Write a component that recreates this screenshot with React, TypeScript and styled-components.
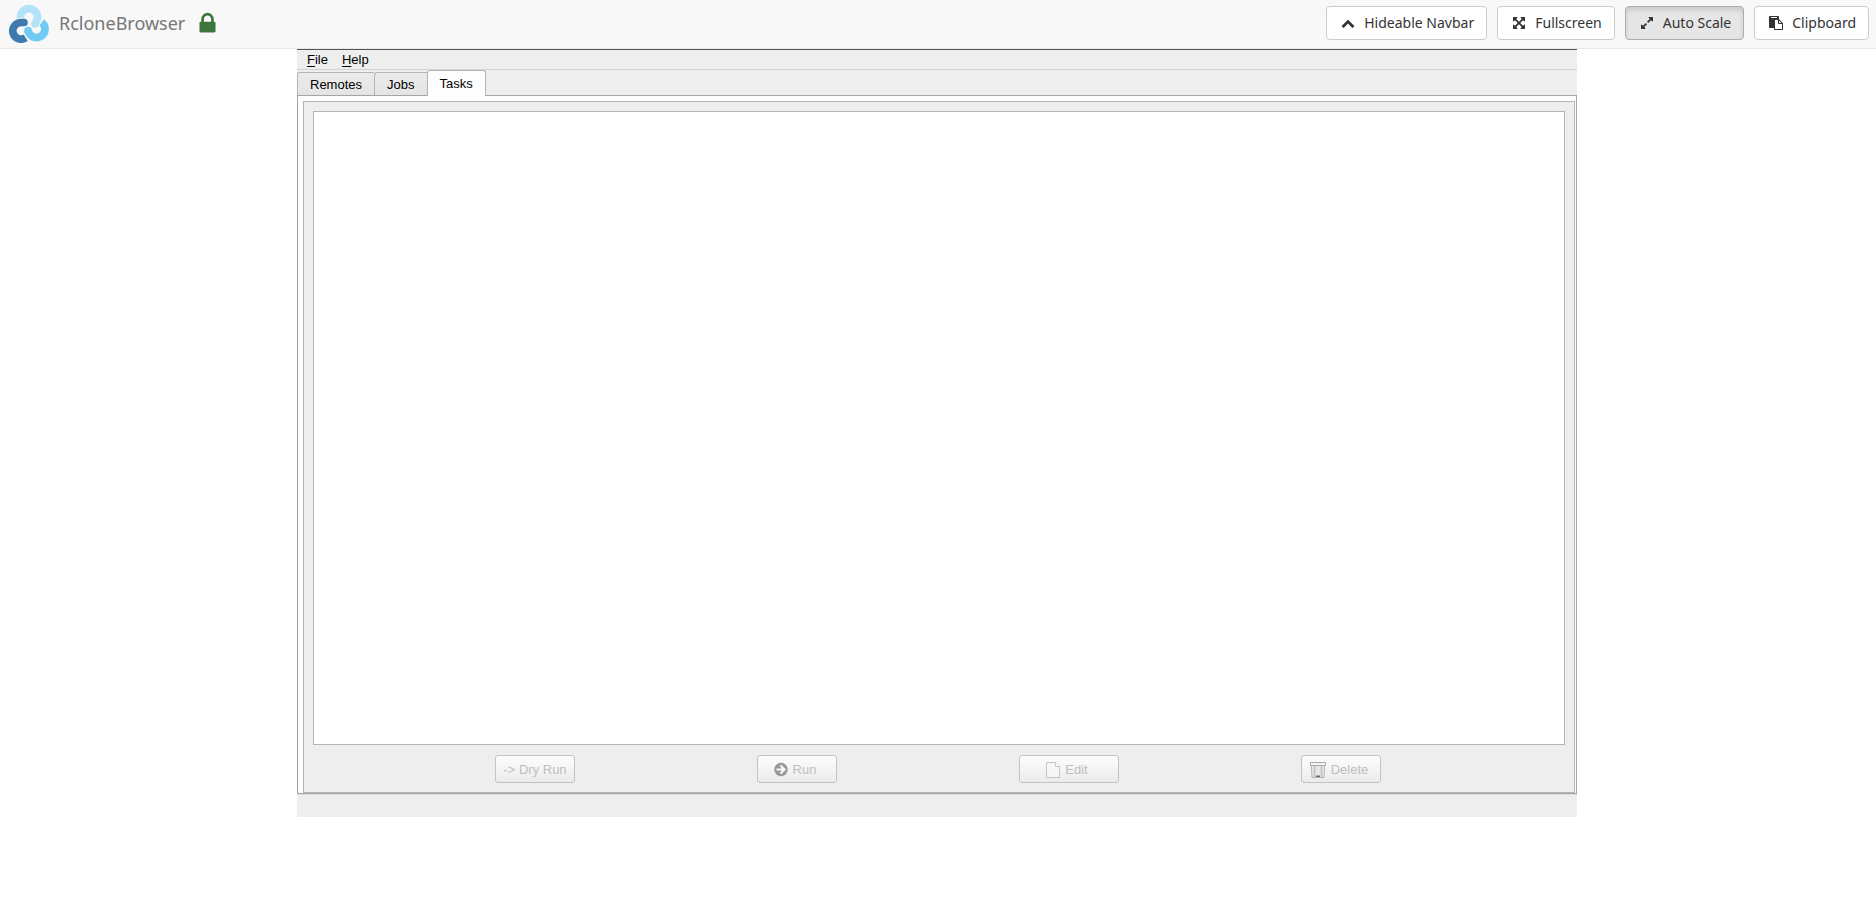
import React, { useState } from "react";
import styled, { createGlobalStyle, css } from "styled-components";

const GlobalStyle = createGlobalStyle`
  *, *::before, *::after { box-sizing: border-box; }
  body { margin: 0; background: #fff; }
`;

/* ---------- top navigation bar ---------- */

const Navbar = styled.nav`
  display: flex;
  align-items: center;
  justify-content: space-between;
  height: 49px;
  padding: 0 7px 2px 9px;
  background: #f8f8f8;
  border-bottom: 1px solid #e7e7e7;
  font: 14px/20px "Noto Sans", "Open Sans", sans-serif;
`;

const Brand = styled.div`
  display: flex;
  align-items: center;
`;

const BrandName = styled.a`
  margin: 0 10px;
  color: #777;
  font-size: 18px;
  line-height: 20px;
  text-decoration: none;
`;

const NavActions = styled.div`
  display: flex;
  gap: 10px;
`;

const NavButton = styled.button<{ $active?: boolean }>`
  display: flex;
  align-items: center;
  height: 34px;
  padding: 0 12px;
  gap: 7px;
  border: 1px solid #ccc;
  border-radius: 4px;
  background: #fff;
  color: #333;
  font: inherit;
  cursor: pointer;
  ${(p) =>
    p.$active &&
    css`
      background: #e6e6e6;
      border-color: #adadad;
      box-shadow: inset 0 3px 5px rgba(0, 0, 0, 0.125);
    `}
`;

const IconSlot = styled.span`
  display: flex;
  justify-content: center;
  width: 18px;
`;

/* ---------- application window ---------- */

const Stage = styled.main`
  display: flex;
  justify-content: center;
  padding-right: 2px;
  font: 13px/16px "Liberation Sans", Arial, sans-serif;
  color: #000;
`;

const AppWindow = styled.section`
  display: flex;
  flex-direction: column;
  width: 100%;
  max-width: 1280px;
  aspect-ratio: 5 / 3;
  background: #eee;
  border-top: 1px solid #555;
`;

const MenuBar = styled.div`
  display: flex;
  gap: 14px;
  padding: 2px 10px 1px;
  border-bottom: 1px solid #d3d3d3;
`;

const MenuButton = styled.button`
  padding: 0;
  border: 0;
  background: none;
  color: inherit;
  font: inherit;
  u { text-underline-offset: 2px; }
`;

const TabRow = styled.div`
  display: flex;
  align-items: flex-end;
  height: 25px;
`;

const Tab = styled.button<{ $active: boolean }>`
  height: 23px;
  padding: 2px 12px 0;
  border: 1px solid #b4b4b4;
  border-right-width: 0;
  border-bottom: 0;
  border-radius: 3px 0 0 0;
  background: linear-gradient(#ebebeb, #e4e4e4);
  color: inherit;
  font: inherit;
  ${(p) =>
    p.$active &&
    css`
      position: relative;
      height: 26px;
      margin-bottom: -1px;
      padding: 0 12px;
      border-right-width: 1px;
      border-radius: 3px 3px 0 0;
      background: #fdfdfd;
    `}
`;

const Pane = styled.div`
  display: flex;
  flex: 1;
  padding: 5px 1px 0 5px;
  border: 1px solid #a5a5a5;
  background: #fdfdfd;
`;

const Frame = styled.div`
  display: flex;
  flex: 1;
  flex-direction: column;
  padding: 9px;
  border: 1px solid #b4b4b4;
  background: #eee;
`;

const TaskList = styled.div`
  flex: 1;
  border: 1px solid #b4b4b4;
  background: #fff;
`;

const ActionRow = styled.div`
  display: flex;
  justify-content: space-evenly;
  padding: 10px 2px 0 0;
`;

const ActionButton = styled.button<{ $wide?: boolean }>`
  display: flex;
  align-items: center;
  justify-content: center;
  gap: 5px;
  width: ${(p) => (p.$wide ? 100 : 80)}px;
  height: 28px;
  padding: 1px 0 0;
  border: 1px solid #c3c3c3;
  border-radius: 3px;
  background: linear-gradient(#fdfdfd, #ebebeb);
  color: #bebebe;
  font: inherit;
  white-space: nowrap;
  &:has(svg) { padding-right: 4px; }
`;

const StatusBar = styled.footer`
  height: 23px;
  border-top: 1px solid #dcdcdc;
`;

/* ---------- drawings ---------- */

const GlyphSvg = styled.svg`
  display: block;
  fill: currentColor;
`;

const Glyph = ({ d, size = 14 }: { d: string; size?: number }) => (
  <GlyphSvg width={size} height={size} viewBox="0 0 1792 1792" aria-hidden>
    <path d={d} />
  </GlyphSvg>
);

const LockMark = styled.span`
  color: #3c763d;
`;

const glyphs = {
  chevron:
    "M1683 1331l-166 165q-19 19-45 19t-45-19l-531-531-531 531q-19 19-45 19t-45-19l-166-165q-19-19-19-45.5t19-45.5l742-741q19-19 45-19t45 19l742 741q19 19 19 45.5t-19 45.5z",
  arrows:
    "M1411 541l-355 355 355 355 144-144q29-31 70-14 39 17 39 59v448q0 26-19 45t-45 19h-448q-42 0-59-40-17-39 14-69l144-144-355-355-355 355 144 144q31 30 14 69-17 40-59 40h-448q-26 0-45-19t-19-45v-448q0-42 40-59 39-17 69 14l144 144 355-355-355-355-144 144q-19 19-45 19-12 0-24-5-40-17-40-59v-448q0-26 19-45t45-19h448q42 0 59 40 17 39-14 69l-144 144 355 355 355-355-144-144q-31-30-14-69 17-40 59-40h448q26 0 45 19t19 45v448q0 42-39 59-13 5-25 5-26 0-45-19z",
  expand:
    "M883 1056q0 13-10 23l-332 332 144 144q19 19 19 45t-19 45-45 19h-448q-26 0-45-19t-19-45v-448q0-26 19-45t45-19 45 19l144 144 332-332q10-10 23-10t23 10l114 114q10 10 10 23zm781-864v448q0 26-19 45t-45 19-45-19l-144-144-332 332q-10 10-23 10t-23-10l-114-114q-10-10-10-23t10-23l332-332-144-144q-19-19-19-45t19-45 45-19h448q26 0 45 19t19 45z",
  clipboard:
    "M768 1664h896v-640h-416q-40 0-68-28t-28-68v-416h-384v1152zm256-1440v-64q0-13-9.5-22.5t-22.5-9.5h-704q-13 0-22.5 9.5t-9.5 22.5v64q0 13 9.5 22.5t22.5 9.5h704q13 0 22.5-9.5t9.5-22.5zm256 672h299l-299-299v299zm512 128v672q0 40-28 68t-68 28h-960q-40 0-68-28t-28-68v-160h-544q-40 0-68-28t-28-68v-1344q0-40 28-68t68-28h1088q40 0 68 28t28 68v328q21 13 36 28l408 408q28 28 48 76t20 88z",
  lock: "M640 768h512v-192q0-106-75-181t-181-75-181 75-75 181v192zm832 96v576q0 40-28 68t-68 28h-960q-40 0-68-28t-28-68v-576q0-40 28-68t68-28h32v-192q0-184 132-316t316-132 316 132 132 316v192h32q40 0 68 28t28 68z",
};

const Logo = () => (
  <svg width="40" height="40" viewBox="27 9 120 120" fill="none" strokeWidth="23" aria-hidden>
    <path stroke="#b4e3f9" d="M61.5 54 A25.5 25.5 0 1 1 109 64 L105 71" />
    <circle cx="105" cy="72" r="11.5" fill="#b4e3f9" />
    <path stroke="#70caf2" d="M125 67 A25.5 25.5 0 1 1 84.500 92" />
    <circle cx="84" cy="92" r="11.5" fill="#70caf2" />
    <path stroke="#3f79ad" d="M72 67.500 H64 A25 25 0 1 0 77 113.500" />
    <circle cx="72" cy="67.500" r="11.5" fill="#3f79ad" />
  </svg>
);

const RunIcon = () => (
  <svg width="14" height="15" viewBox="0 0 14 15" aria-hidden>
    <circle cx="7" cy="7.500" r="6.800" fill="#999" />
    <path d="M2.500 7.500h7M6.500 3.500l4 4-4 4" fill="none" stroke="#fafafa" strokeWidth="2" />
  </svg>
);

const PageIcon = () => (
  <svg width="14" height="16" viewBox="0 0 14 16" fill="#f7f7f7" stroke="#c4c4c4" aria-hidden>
    <path d="M.5.5h9l4 4v11H.5z" />
    <path d="M9.500.5v4h4" fill="#fff" />
  </svg>
);

const TrashIcon = () => (
  <svg width="16" height="16" viewBox="0 0 16 16" aria-hidden>
    <path d="M1.500 3.500h13l-.5 12H2z" fill="#f0f0f0" stroke="#b0b0b0" />
    <path d="M4.500 4v11M11.500 4v11" stroke="#c4c4c4" strokeWidth="2" />
    <path d="M7 4v9M9 4v9" stroke="#ddd" />
    <path d="M.5.5h15v3H.5z" fill="#f5f5f5" stroke="#a8a8a8" />
    <path d="M6 13.500h4v1.500H6z" fill="#666" />
  </svg>
);

const tabs = ["Remotes", "Jobs", "Tasks"];

export default function App() {
  const [tab, setTab] = useState("Tasks");
  const [autoScale, setAutoScale] = useState(true);

  return (
    <>
      <GlobalStyle />
      <Navbar>
        <Brand>
          <Logo />
          <BrandName href="#">RcloneBrowser</BrandName>
          <LockMark role="img" aria-label="Secure connection">
            <Glyph d={glyphs.lock} size={25} />
          </LockMark>
        </Brand>
        <NavActions>
          <NavButton>
            <IconSlot><Glyph d={glyphs.chevron} /></IconSlot>
            Hideable Navbar
          </NavButton>
          <NavButton>
            <IconSlot><Glyph d={glyphs.arrows} /></IconSlot>
            Fullscreen
          </NavButton>
          <NavButton $active={autoScale} aria-pressed={autoScale} onClick={() => setAutoScale(!autoScale)}>
            <IconSlot><Glyph d={glyphs.expand} /></IconSlot>
            Auto Scale
          </NavButton>
          <NavButton>
            <IconSlot><Glyph d={glyphs.clipboard} /></IconSlot>
            Clipboard
          </NavButton>
        </NavActions>
      </Navbar>
      <Stage>
        <AppWindow>
          <MenuBar>
            <MenuButton><u>F</u>ile</MenuButton>
            <MenuButton><u>H</u>elp</MenuButton>
          </MenuBar>
          <TabRow role="tablist">
            {tabs.map((name) => (
              <Tab key={name} role="tab" aria-selected={name === tab} $active={name === tab} onClick={() => setTab(name)}>
                {name}
              </Tab>
            ))}
          </TabRow>
          <Pane role="tabpanel">
            <Frame>
              <TaskList role="listbox" aria-label="Tasks" />
              <ActionRow>
                <ActionButton disabled>-&gt; Dry Run</ActionButton>
                <ActionButton disabled><RunIcon />Run</ActionButton>
                <ActionButton disabled $wide><PageIcon />Edit</ActionButton>
                <ActionButton disabled><TrashIcon />Delete</ActionButton>
              </ActionRow>
            </Frame>
          </Pane>
          <StatusBar />
        </AppWindow>
      </Stage>
    </>
  );
}
